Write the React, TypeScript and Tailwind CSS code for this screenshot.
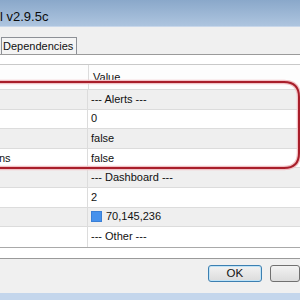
import React from "react";

// property rows shown in the grid
interface IRow {
  label: string;
  value: string;
  swatch?: string;
}

const rows: IRow[] = [
  { label: "", value: "--- Alerts ---" },
  { label: "", value: "0" },
  { label: "", value: "false" },
  { label: "ns", value: "false" },
  { label: "", value: "--- Dashboard ---" },
  { label: "", value: "2" },
  { label: "", value: "70,145,236", swatch: "#4691ec" },
  { label: "", value: "--- Other ---" },
];

export default function App() {
  return (
    <div
      className="relative w-[300px] h-[300px] overflow-hidden bg-[#f0f0f0] text-[11px] text-[#111]"
      style={{ fontFamily: '"Liberation Sans", Arial, sans-serif' }}
    >
      {/* title bar */}
      <div className="h-[27px] bg-gradient-to-b from-[#8aa8ca] to-[#aec5df] border-b border-[#c8d7ea] flex items-center">
        <span className="text-[13px] leading-none mt-[6px] text-[#0c0c0c]">l v2.9.5c</span>
      </div>

      {/* tab strip */}
      <div className="h-[27px] flex items-end pl-[1px]">
        <div className="h-[17px] pl-[1px] pr-[3px] border border-b-0 border-[#8d9096] bg-[#f4f4f4] flex items-center leading-none">
          Dependencies
        </div>
      </div>

      {/* tab page */}
      <div className="h-[205px] bg-white border-y border-[#9a9a9a] pt-[9px]">
        <div className="border-t border-[#c9c9c9] border-b border-b-[#a9a9a9]">
          <div className="h-[25px] flex bg-[#fdfdfd] border-b border-[#dcdcdc]">
            <div className="w-[89px] border-r border-[#dcdcdc]" />
            <div className="pl-[4px] pt-[7px] leading-none">Value</div>
          </div>
          {rows.map((row, idx) => (
            <div
              key={idx}
              className={`h-[19.6px] flex border-b border-[#dcdcdc] last:border-b-0 ${
                idx % 2 === 0 ? "bg-[#efefef]" : "bg-white"
              }`}
            >
              <div className="w-[89px] border-r border-[#dcdcdc] flex items-center leading-none -ml-[1px]">
                {row.label}
              </div>
              <div className="pl-[3px] flex items-center gap-[4px] leading-none">
                {row.swatch && <span className="w-[11px] h-[11px] bg-[#4691ec] border border-[#3a7fd6]" />}
                {row.value}
              </div>
            </div>
          ))}
        </div>
      </div>

      {/* button bar */}
      <div className="h-[34px] flex items-start pt-[6px] pl-[208px] gap-[8px]">
        <button className="w-[72px] h-[17px] rounded-[3px] border border-[#3c7fb1] bg-gradient-to-b from-[#f2f2f2] to-[#dcdcdc] shadow-[inset_0_0_0_1px_#bfe3f7] text-[11.5px] leading-none">
          OK
        </button>
        <button className="w-[40px] h-[17px] rounded-[3px] border border-[#707070] bg-gradient-to-b from-[#f2f2f2] to-[#dcdcdc]" />
      </div>

      {/* window frame bottom */}
      <div className="h-[7px] bg-[#c4d6ec]" />

      {/* red annotation */}
      <svg className="absolute left-0 top-0 pointer-events-none" width="300" height="300">
        <path
          d="M -20 82 H 284 Q 299 82 299 97 V 153 Q 299 168 284 168 H -20"
          fill="none"
          stroke="#f1c2c6"
          strokeWidth="4.5"
        />
        <path
          d="M -20 82 H 284 Q 299 82 299 97 V 153 Q 299 168 284 168 H -20"
          fill="none"
          stroke="#a81e2a"
          strokeWidth="2"
        />
      </svg>
    </div>
  );
}
